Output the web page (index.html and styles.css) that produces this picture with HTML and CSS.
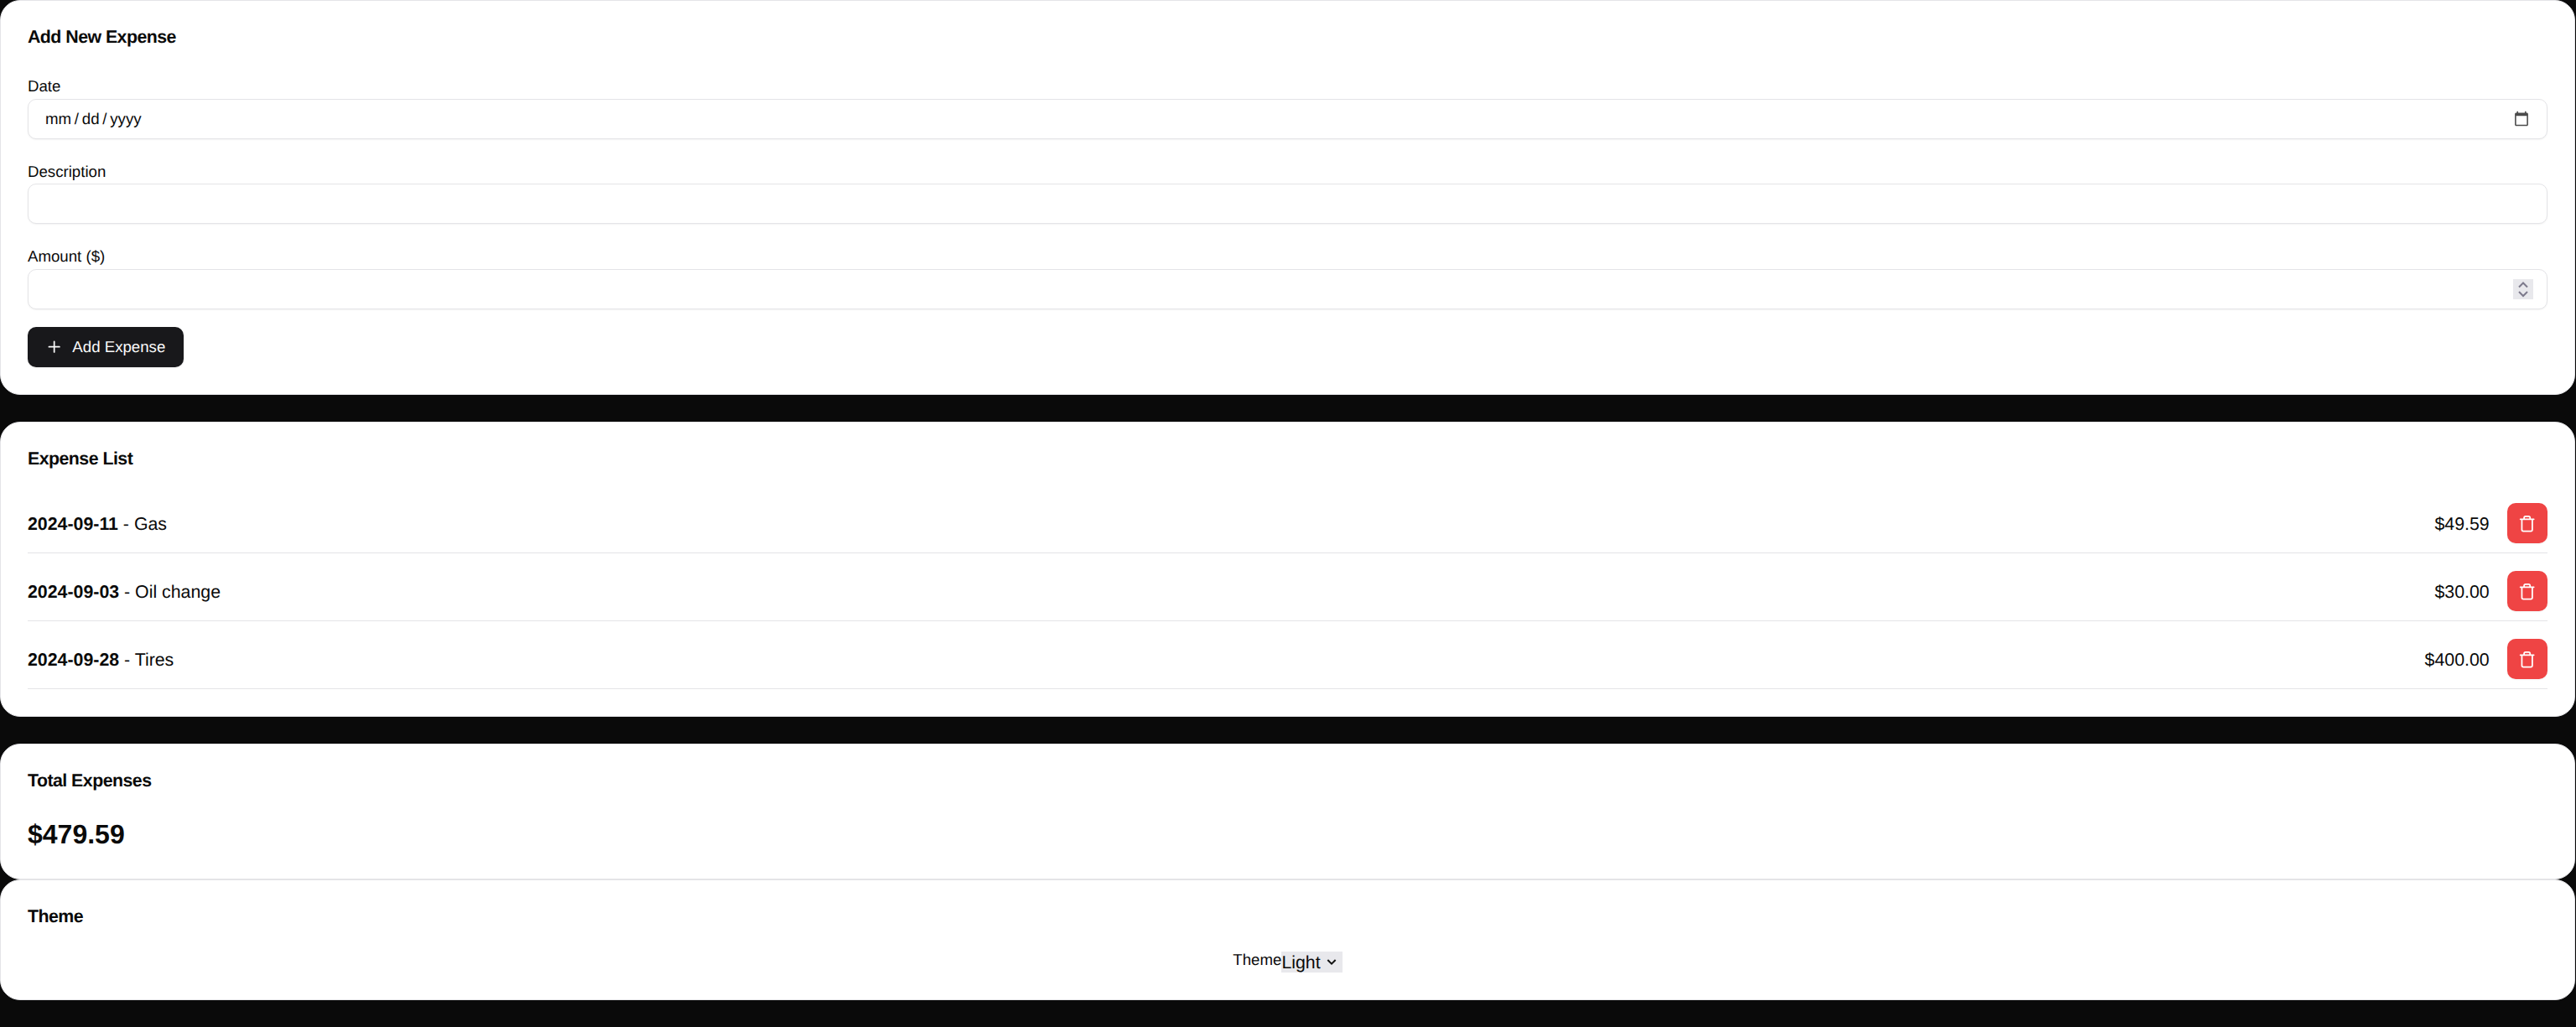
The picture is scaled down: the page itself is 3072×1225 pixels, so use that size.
FILE: index.html
```html
<!DOCTYPE html>
<html lang="en">
<head>
  <meta charset="UTF-8" />
  <meta name="viewport" content="width=device-width, initial-scale=1.0"/>
  <title>Expense Tracker</title>
  <link rel="stylesheet" href="styles.css">
</head>
<body>
  <section class="card">
    <h2 class="card-title">Add New Expense</h2>
    <div class="fields">
      <div class="field">
        <label class="field-label" for="date">Date</label>
        <input class="input" id="date" type="date">
      </div>
      <div class="field">
        <label class="field-label" for="desc">Description</label>
        <input class="input" id="desc" type="text">
      </div>
      <div class="field">
        <label class="field-label" for="amount">Amount ($)</label>
        <div class="input-wrap">
          <input class="input" id="amount" type="number">
          <span class="spinner">
            <svg width="24" height="24" viewBox="0 0 24 24" fill="none" stroke="#7d7a8c" stroke-width="2"><path d="M7 9.500l5-5 5 5M7 15l5 5 5-5"/></svg>
          </span>
        </div>
      </div>
    </div>
    <button class="add-btn">
      <svg width="21.33" height="21.33" viewBox="0 0 24 24" fill="none" stroke="#fafafa" stroke-width="2" stroke-linecap="round"><path d="M5 12h14M12 5v14"/></svg>
      Add Expense
    </button>
  </section>

  <section class="card">
    <h2 class="card-title">Expense List</h2>
    <ul class="expense-list">
      <li class="expense-row">
        <span class="expense-name"><strong>2024-09-11</strong> - Gas</span>
        <div class="expense-right">
          <span class="expense-amount">$49.59</span>
          <button class="del-btn"><svg width="21.33" height="21.33" viewBox="0 0 24 24" fill="none" stroke="#fff" stroke-width="2" stroke-linecap="round" stroke-linejoin="round"><path d="M3 6h18M19 6v14c0 1-1 2-2 2H7c-1 0-2-1-2-2V6M8 6V4c0-1 1-2 2-2h4c1 0 2 1 2 2v2"/></svg></button>
        </div>
      </li>
      <li class="expense-row">
        <span class="expense-name"><strong>2024-09-03</strong> - Oil change</span>
        <div class="expense-right">
          <span class="expense-amount">$30.00</span>
          <button class="del-btn"><svg width="21.33" height="21.33" viewBox="0 0 24 24" fill="none" stroke="#fff" stroke-width="2" stroke-linecap="round" stroke-linejoin="round"><path d="M3 6h18M19 6v14c0 1-1 2-2 2H7c-1 0-2-1-2-2V6M8 6V4c0-1 1-2 2-2h4c1 0 2 1 2 2v2"/></svg></button>
        </div>
      </li>
      <li class="expense-row">
        <span class="expense-name"><strong>2024-09-28</strong> - Tires</span>
        <div class="expense-right">
          <span class="expense-amount">$400.00</span>
          <button class="del-btn"><svg width="21.33" height="21.33" viewBox="0 0 24 24" fill="none" stroke="#fff" stroke-width="2" stroke-linecap="round" stroke-linejoin="round"><path d="M3 6h18M19 6v14c0 1-1 2-2 2H7c-1 0-2-1-2-2V6M8 6V4c0-1 1-2 2-2h4c1 0 2 1 2 2v2"/></svg></button>
        </div>
      </li>
    </ul>
  </section>

  <section class="card card-total">
    <h2 class="card-title">Total Expenses</h2>
    <p class="total">$479.59</p>
  </section>

  <section class="card card-theme">
    <h2 class="card-title">Theme</h2>
    <div class="theme-row">
      <span class="theme-label">Theme</span>
      <span class="theme-select">Light
        <svg width="16" height="16" viewBox="0 0 24 24" fill="none" stroke="#111" stroke-width="3"><path d="m5 9 7 7 7-7"/></svg>
      </span>
    </div>
  </section>
</body>
</html>
```

FILE: styles.css
```css
body { margin: 0; padding-right: 1px; background: #0a0a0a; color: #0a0a0a; font-family: "Liberation Sans", Arial, sans-serif; font-size: 18.67px; text-rendering: geometricPrecision; height: 1225px; overflow: hidden; }

.card { background: #fff; border: 1px solid #e4e4e7; border-radius: 24px; padding: 32px; margin-bottom: 32px; }
.card-total { margin-bottom: 0; }
.card-title { margin: 0 0 35px; font-size: 21.33px; line-height: 23.33px; font-weight: 700; letter-spacing: -0.53px; }
.card-theme .card-title { margin-bottom: 27px; }

.fields { display: flex; flex-direction: column; gap: 26.67px; margin-bottom: 21.33px; }
.field-label { display: block; line-height: 24px; height: 26.67px; }
.input { display: block; width: 100%; height: 48px; box-sizing: border-box; background: #fff; border: 1px solid #e4e4e7; border-radius: 10px; padding: 0 20px 0 19px; color: #0a0a0a; font: inherit; text-rendering: geometricPrecision; box-shadow: 0 1px 2px rgba(0,0,0,.05); outline: none; }
.input::-webkit-datetime-edit-text { padding: 0 2.75px; }
.input::-webkit-calendar-picker-indicator { width: 20px; height: 20px; padding: 0; margin: 0; opacity: .7; }
.input[type=number] { appearance: textfield; }

.input-wrap { position: relative; }
.spinner { position: absolute; top: 12px; right: 17px; width: 24px; height: 24px; background: #e8e8ec; display: flex; }

.add-btn { display: flex; align-items: center; gap: 10.67px; height: 48px; padding: 0 21.33px; border: none; border-radius: 10px; background: #18181b; color: #fafafa; font: inherit; text-rendering: geometricPrecision; box-shadow: 0 1px 2px rgba(0,0,0,.1); }

.expense-list { list-style: none; margin: 0; padding: 0; display: flex; flex-direction: column; gap: 15px; }
.expense-row { display: flex; justify-content: space-between; align-items: center; box-sizing: border-box; padding: 6px 0 11px; border-bottom: 1px solid #e4e4e7; font-size: 21.33px; }
.expense-name { padding-top: 2px; }
.expense-right { display: flex; align-items: center; gap: 21.33px; }
.expense-amount { padding-top: 2px; }
.del-btn { width: 48px; height: 48px; border: none; border-radius: 10px; background: #ef4444; display: flex; align-items: center; justify-content: center; padding: 0; box-shadow: 0 1px 2px rgba(0,0,0,.05); }

.total { margin: 0 0 4px; font-size: 32px; font-weight: 700; line-height: 33px; }

.theme-row { display: flex; justify-content: center; align-items: flex-end; height: 28px; }
.theme-label { line-height: 25px; align-self: flex-start; }
.theme-select { display: flex; align-items: center; gap: 5px; box-sizing: border-box; background: #e8e8ec; font-size: 21.33px; height: 25px; padding: 3px 5px 0 0; }
.theme-select svg { margin-top: -3px; }
```
